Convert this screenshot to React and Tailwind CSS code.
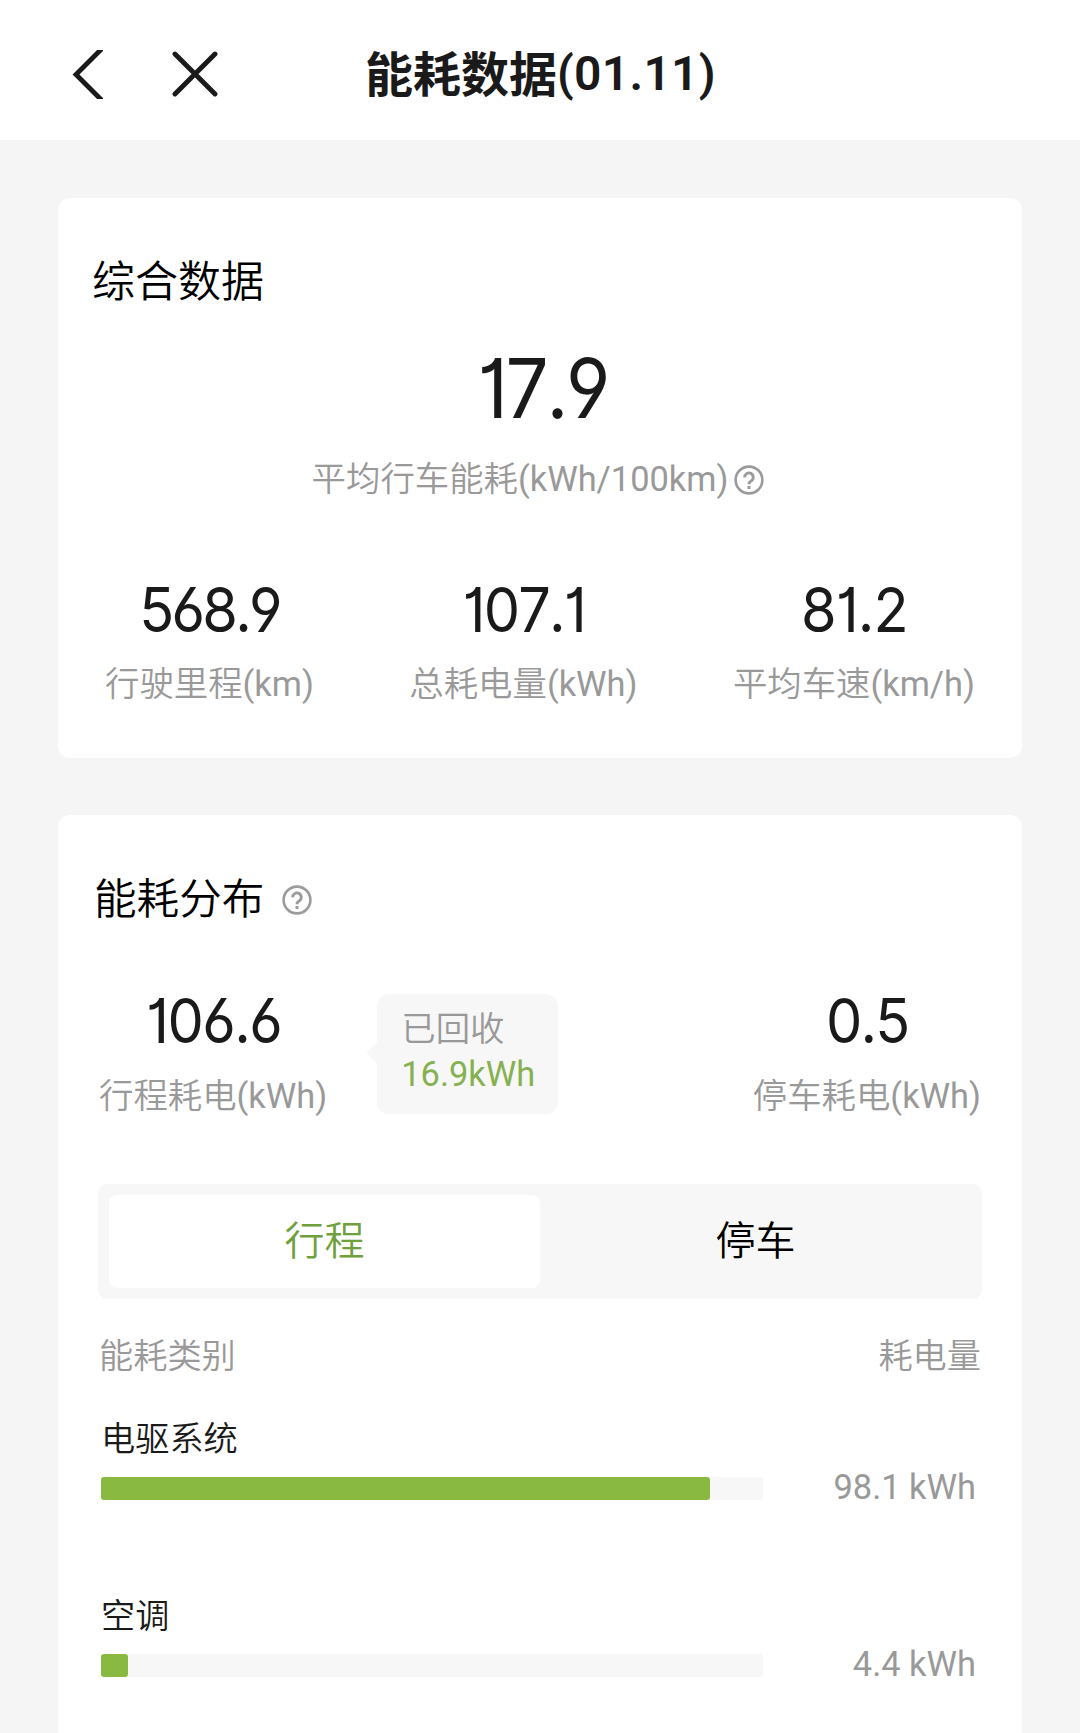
import React from "react";

const SANS = "font-[Roboto,'Noto_Sans_CJK_SC',sans-serif]";
const DIGITS =
  "font-[Inter,sans-serif] font-normal text-[#1a1a1a] origin-center scale-x-[0.93] [font-feature-settings:'cv01','cv03','cv04','kern'_0,'calt'_0]";

function HelpIcon({ className = "" }) {
  return (
    <svg width="30" height="30" viewBox="0 0 30 30" fill="none" stroke="#9b9b9b" className={`shrink-0 ${className}`}>
      <circle cx="15" cy="15" r="13.4" strokeWidth="2.6" />
      <path d="M10.7 12.400a4.300 4.300 0 1 1 6.700 3.400c-1.600 1-2.400 1.600-2.400 3.400" strokeWidth="2.900" />
      <path d="M15 21v3" strokeWidth="3" />
    </svg>
  );
}

function Metric({ value, label, unit, tracking, shift = "", gap = "mt-[15px]", className = "" }) {
  return (
    <div className={`flex flex-col items-center ${className}`}>
      <div className={`text-[62px] leading-[68px] ${DIGITS} ${tracking} ${shift}`}>{value}</div>
      <div className={`text-[34.4px] leading-[50px] text-[#999] whitespace-nowrap ${gap}`}>
        {label}
        <span className="font-normal">({unit})</span>
      </div>
    </div>
  );
}

function UsageRow({ name, value, percent, className = "" }) {
  return (
    <div className={className}>
      <div className="h-[50px] leading-[50px] text-[34.2px] text-[#1a1a1a]">{name}</div>
      <div className="mt-[13px] flex h-[23px] items-center">
        <div className="h-[23px] w-[662px] rounded-[3px] bg-[#f7f7f7]">
          <div className="h-full rounded-[3px] bg-[#8ab942]" style={{ width: `${percent}%` }} />
        </div>
        <div className="-mt-[4px] flex-1 text-right text-[34.4px] font-normal leading-[40px] text-[#999]">{value}</div>
      </div>
    </div>
  );
}

export default function App() {
  return (
    <div className={`h-[1733px] w-[1080px] overflow-hidden bg-[#f5f5f5] font-[350] ${SANS}`} lang="zh-CN">
      <header className="flex h-[140px] bg-white pt-[48px]">
        <svg width="31" height="49" viewBox="0 0 31 49" className="ml-[72px] mt-[2px]" fill="none" stroke="#1a1a1a" strokeWidth="4.9">
          <path d="M32 -3.500L4 24.500L32 52.500" />
        </svg>
        <svg width="46" height="48" viewBox="0 0 46 48" className="ml-[69px] mt-[2px]" fill="none" stroke="#1a1a1a" strokeWidth="4.9" strokeLinecap="round">
          <path d="M3 4L43 44M43 4L3 44" />
        </svg>
        <h1 className="ml-[147px] -mt-[7px] text-[48px] font-bold leading-[70px] text-[#1a1a1a]">
          能耗数据<span className="relative -top-[2px] font-semibold tracking-[0.3px]">(01.11)</span>
        </h1>
      </header>

      <section className="mx-[58px] mt-[58px] h-[560px] rounded-[12px] bg-white pt-[52px]">
        <h2 className="pl-[34px] text-[43px] leading-[64px] text-black">综合数据</h2>
        <div className={`mt-[25px] pl-[6px] text-center text-[82px] leading-[100px] tracking-[-2.5px] ${DIGITS}`}>17.9</div>
        <div className="mt-[15px] flex items-center justify-center gap-[6px] pr-[4px]">
          <span className="text-[34.4px] leading-[50px] text-[#999]">
            平均行车能耗<span className="font-normal">(kWh/100km)</span>
          </span>
          <HelpIcon className="mt-[2px]" />
        </div>
        <div className="mt-[72px] flex justify-between pl-[47px] pr-[47px]">
          <Metric value="568.9" label="行驶里程" unit="km" tracking="tracking-[-3px]" />
          <Metric value="107.1" label="总耗电量" unit="kWh" tracking="tracking-[-2px]" />
          <Metric value="81.2" label="平均车速" unit="km/h" tracking="tracking-[-1px]" />
        </div>
      </section>

      <section className="mx-[58px] mt-[57px] h-[930px] rounded-[12px] bg-white pt-[52px]">
        <h2 className="flex items-center gap-[18px] pl-[36px] text-[42.6px] leading-[64px] text-black">
          能耗分布
          <HelpIcon className="mt-[2px]" />
        </h2>
        <div className="mt-[56px] flex pl-[41px] pr-[41px]">
          <Metric value="106.6" label="行程耗电" unit="kWh" tracking="tracking-[-1.700px]" gap="mt-[16px]" shift="translate-x-[1px]" />
          <div className="relative ml-[50px] mt-[7px] h-[120px] w-[181px] rounded-[12px] bg-[#f7f7f7] pl-[24px] pt-[12px]">
            <div className="absolute -left-[7px] top-[50px] h-[18px] w-[18px] rotate-45 bg-[#f7f7f7]" />
            <div className="relative text-[34.4px] leading-[46px] text-[#999]">已回收</div>
            <div className="relative text-[34.4px] font-normal leading-[44px] text-[#86b150]">16.9kWh</div>
          </div>
          <Metric value="0.5" label="停车耗电" unit="kWh" tracking="tracking-[-2px]" gap="mt-[16px]" className="ml-auto" />
        </div>
        <div className="mx-[40px] mt-[63px] flex h-[115px] rounded-[10px] bg-[#f7f7f7] p-[11px] text-[40px] leading-[94px]">
          <div className="flex-1 rounded-[8px] bg-white text-center text-[#6fa03c]">行程</div>
          <div className="flex-1 text-center text-black">停车</div>
        </div>
        <div className="mx-[41px] mt-[32px] flex justify-between text-[34.2px] leading-[50px] text-[#999]">
          <span>能耗类别</span>
          <span>耗电量</span>
        </div>
        <div className="pl-[43px] pr-[46px]">
          <UsageRow name="电驱系统" value="98.1 kWh" percent={92} className="mt-[33px]" />
          <UsageRow name="空调" value="4.4 kWh" percent={4.1} className="mt-[91px]" />
        </div>
      </section>
    </div>
  );
}
